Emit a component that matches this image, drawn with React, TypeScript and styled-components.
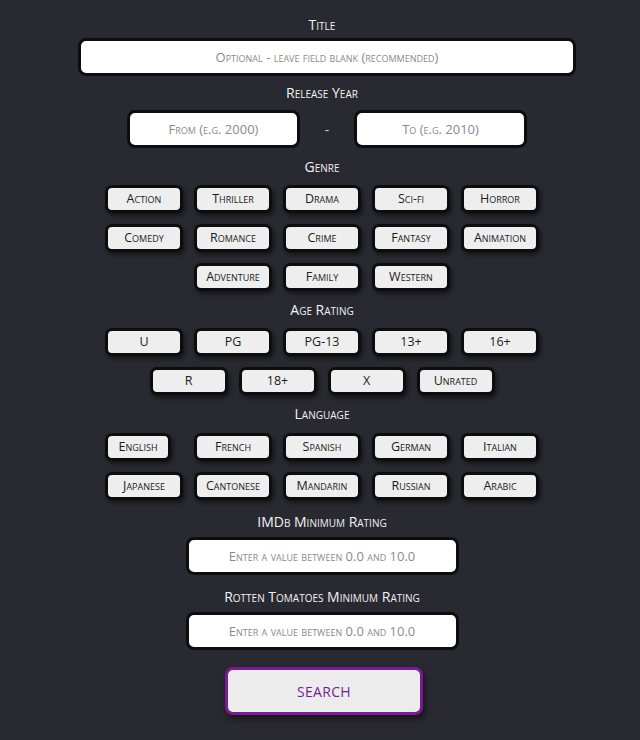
import React from "react";
import styled, { createGlobalStyle } from "styled-components";

const Global = createGlobalStyle`
  html, body { margin: 0; padding: 0; background: #292931; }
  body { font-family: "Open Sans", "Liberation Sans", sans-serif; }
  * { box-sizing: border-box; }
`;

const Page = styled.main`
  width: 640px;
  min-height: 740px;
  padding: 16px 0 0 4px;
  display: flex;
  flex-direction: column;
  align-items: center;
  background: #292931;
`;

const Section = styled.section<{ $top?: number }>`
  margin-top: ${(p) => p.$top ?? 0}px;
  display: flex;
  flex-direction: column;
  align-items: center;
`;

const Label = styled.label<{ $gap?: number }>`
  display: block;
  color: #f2f2f2;
  font-size: 14px;
  line-height: 18px;
  font-variant: small-caps;
  margin-bottom: ${(p) => p.$gap ?? 9}px;
  text-align: center;
`;

const TextField = styled.input<{ $width: number; $shift?: number }>`
  width: ${(p) => p.$width}px;
  height: 38px;
  margin-left: ${(p) => p.$shift ?? 0}px;
  border: 3px solid #0d0d0f;
  border-radius: 8px;
  background: #ffffff;
  text-align: center;
  font-family: "Open Sans", "Liberation Sans", sans-serif;
  font-size: 13px;
  font-variant: small-caps;
  color: #333;
  outline: none;
  &::placeholder {
    color: #8a8a8a;
    font-variant: small-caps;
  }
`;

const YearRow = styled.div`
  display: flex;
  align-items: center;
  gap: 24px;
  margin-left: 10px;
`;

const Dash = styled.span`
  color: #cfcfcf;
  font-size: 14px;
  width: 6px;
  text-align: center;
`;

const ChipGrid = styled.div`
  display: flex;
  flex-direction: column;
  align-items: center;
  gap: 11px;
`;

const ChipRow = styled.div`
  display: flex;
  gap: 11px;
  justify-content: center;
`;

const Chip = styled.button<{ $narrow?: boolean }>`
  width: ${(p) => (p.$narrow ? 66 : 78)}px;
  margin-right: ${(p) => (p.$narrow ? 12 : 0)}px;
  height: 28px;
  padding: 0;
  border: 3px solid #0d0d0f;
  border-radius: 7px;
  background: #eeeeee;
  color: #1b1b1b;
  font-family: "Open Sans", "Liberation Sans", sans-serif;
  font-size: 12.5px;
  font-variant: small-caps;
  line-height: 1;
  box-shadow: 2px 3px 4px rgba(0, 0, 0, 0.5);
  cursor: pointer;
`;

const SearchButton = styled.button`
  width: 198px;
  height: 48px;
  margin-left: 4px;
  border: 3px solid #7a1a96;
  border-radius: 8px;
  background: #ececec;
  color: #7a1a96;
  font-family: "Open Sans", "Liberation Sans", sans-serif;
  font-size: 14px;
  letter-spacing: 0.3px;
  box-shadow: 2px 4px 6px rgba(0, 0, 0, 0.5);
  cursor: pointer;
`;

const genres = [
  ["Action", "Thriller", "Drama", "Sci-fi", "Horror"],
  ["Comedy", "Romance", "Crime", "Fantasy", "Animation"],
  ["Adventure", "Family", "Western"],
];

const ages = [
  ["U", "PG", "PG-13", "13+", "16+"],
  ["R", "18+", "X", "Unrated"],
];

const languages = [
  ["English", "French", "Spanish", "German", "Italian"],
  ["Japanese", "Cantonese", "Mandarin", "Russian", "Arabic"],
];

function Chips({ rows }: { rows: string[][] }) {
  return (
    <ChipGrid>
      {rows.map((row, i) => (
        <ChipRow key={i}>
          {row.map((item) => (
            <Chip key={item} type="button" $narrow={item === "English"}>
              {item}
            </Chip>
          ))}
        </ChipRow>
      ))}
    </ChipGrid>
  );
}

export default function App() {
  return (
    <>
      <Global />
      <Page>
        <Section>
          <Label $gap={4}>Title</Label>
          <TextField
            $width={498}
            $shift={10}
            placeholder="Optional - leave field blank (recommended)"
          />
        </Section>
        <Section $top={8}>
          <Label $gap={8}>Release Year</Label>
          <YearRow>
            <TextField $width={173} placeholder="From (e.g. 2000)" />
            <Dash>-</Dash>
            <TextField $width={173} placeholder="To (e.g. 2010)" />
          </YearRow>
        </Section>
        <Section $top={10}>
          <Label $gap={9}>Genre</Label>
          <Chips rows={genres} />
        </Section>
        <Section $top={10}>
          <Label $gap={9}>Age Rating</Label>
          <Chips rows={ages} />
        </Section>
        <Section $top={10}>
          <Label $gap={10}>Language</Label>
          <Chips rows={languages} />
        </Section>
        <Section $top={13}>
          <Label $gap={6}>IMDb Minimum Rating</Label>
          <TextField $width={273} placeholder="Enter a value between 0.0 and 10.0" />
        </Section>
        <Section $top={13}>
          <Label $gap={6}>Rotten Tomatoes Minimum Rating</Label>
          <TextField $width={273} placeholder="Enter a value between 0.0 and 10.0" />
        </Section>
        <Section $top={17}>
          <SearchButton type="button">SEARCH</SearchButton>
        </Section>
      </Page>
    </>
  );
}
